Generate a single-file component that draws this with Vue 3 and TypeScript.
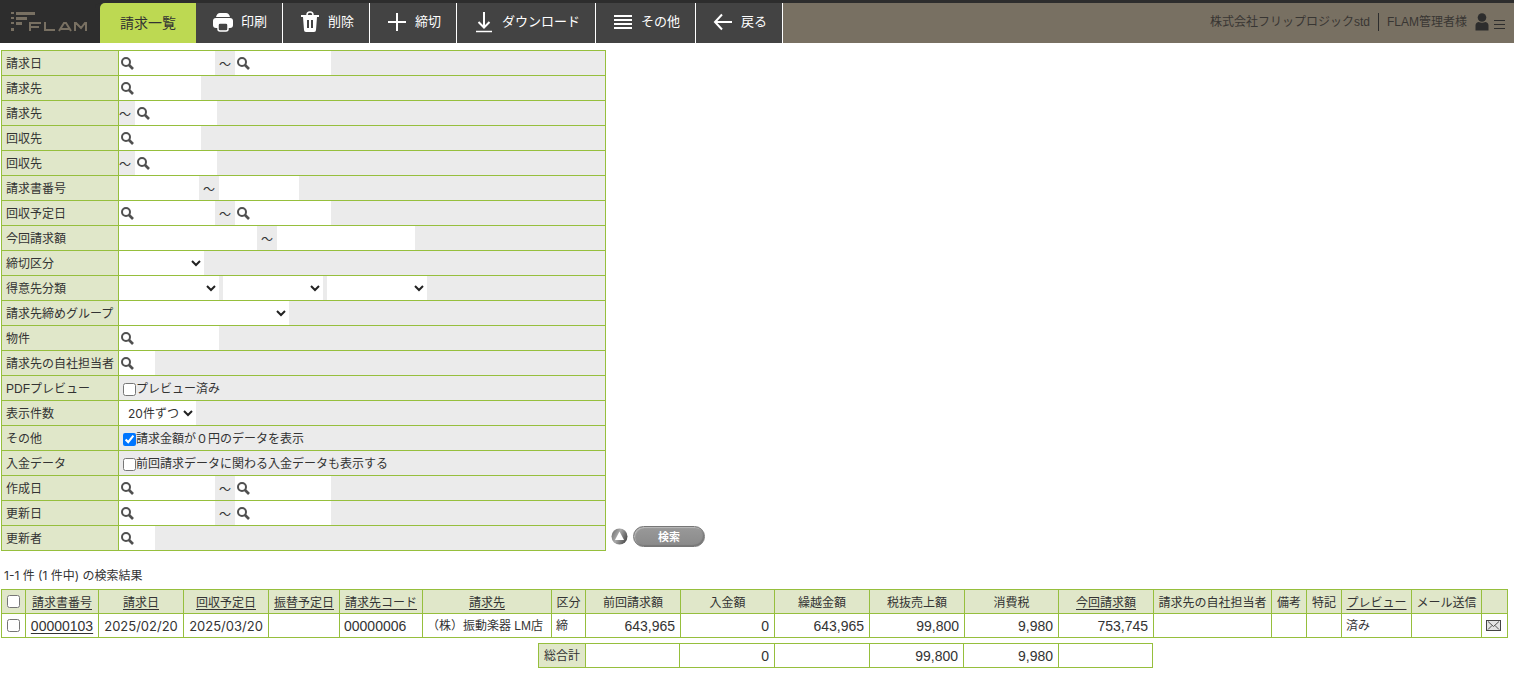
<script setup lang="ts">
import { ref } from 'vue'

interface TextPart { kind: 'text'; width: number; search: boolean }
interface SelectPart { kind: 'select'; width: number; options: string[] }
interface TildePart { kind: 'tilde'; lead?: boolean }
interface CheckPart { kind: 'check'; text: string; checked: boolean }
type Part = TextPart | SelectPart | TildePart | CheckPart

interface Row { label: string; parts: Part[] }

const text = (width: number, search = true): TextPart => ({ kind: 'text', width, search })
const select = (width: number, options: string[] = ['']): SelectPart => ({ kind: 'select', width, options })
const tilde = (lead = false): TildePart => ({ kind: 'tilde', lead })
const check = (label: string, checked = false): CheckPart => ({ kind: 'check', text: label, checked })

const rows = ref<Row[]>([
  { label: '請求日', parts: [text(96), tilde(), text(96)] },
  { label: '請求先', parts: [text(82)] },
  { label: '請求先', parts: [tilde(true), text(82)] },
  { label: '回収先', parts: [text(82)] },
  { label: '回収先', parts: [tilde(true), text(82)] },
  { label: '請求書番号', parts: [text(80, false), tilde(), text(80, false)] },
  { label: '回収予定日', parts: [text(96), tilde(), text(96)] },
  { label: '今回請求額', parts: [text(138, false), tilde(), text(138, false)] },
  { label: '締切区分', parts: [select(85)] },
  { label: '得意先分類', parts: [select(100), select(100), select(100)] },
  { label: '請求先締めグループ', parts: [select(170)] },
  { label: '物件', parts: [text(100)] },
  { label: '請求先の自社担当者', parts: [text(36)] },
  { label: 'PDFプレビュー', parts: [check('プレビュー済み')] },
  { label: '表示件数', parts: [select(77, ['20件ずつ'])] },
  { label: 'その他', parts: [check('請求金額が０円のデータを表示', true)] },
  { label: '入金データ', parts: [check('前回請求データに関わる入金データも表示する')] },
  { label: '作成日', parts: [text(96), tilde(), text(96)] },
  { label: '更新日', parts: [text(96), tilde(), text(96)] },
  { label: '更新者', parts: [text(36)] },
])

const firstControl = (row: Row) => (row.parts[0].kind === 'tilde' ? 1 : 0)

interface Action { label: string; icon: string }
const actions: Action[] = [
  { label: '印刷', icon: 'print' },
  { label: '削除', icon: 'trash' },
  { label: '締切', icon: 'plus' },
  { label: 'ダウンロード', icon: 'download' },
  { label: 'その他', icon: 'list' },
  { label: '戻る', icon: 'back' },
]

interface Column { title: string; width: number; link?: boolean; value: string; kind?: 'num' | 'date' | 'code' | 'link' }
const columns: Column[] = [
  { title: '請求書番号', width: 73, link: true, value: '00000103', kind: 'link' },
  { title: '請求日', width: 85, link: true, value: '2025/02/20', kind: 'date' },
  { title: '回収予定日', width: 85, link: true, value: '2025/03/20', kind: 'date' },
  { title: '振替予定日', width: 71, link: true, value: '' },
  { title: '請求先コード', width: 83, link: true, value: '00000006', kind: 'code' },
  { title: '請求先', width: 129, link: true, value: '（株）振動楽器 LM店' },
  { title: '区分', width: 34, value: '締' },
  { title: '前回請求額', width: 95, value: '643,965', kind: 'num' },
  { title: '入金額', width: 94, value: '0', kind: 'num' },
  { title: '繰越金額', width: 95, value: '643,965', kind: 'num' },
  { title: '税抜売上額', width: 95, value: '99,800', kind: 'num' },
  { title: '消費税', width: 94, value: '9,980', kind: 'num' },
  { title: '今回請求額', width: 95, link: true, value: '753,745', kind: 'num' },
  { title: '請求先の自社担当者', width: 118, value: '' },
  { title: '備考', width: 35, value: '' },
  { title: '特記', width: 35, value: '' },
  { title: 'プレビュー', width: 70, link: true, value: '済み' },
  { title: 'メール送信', width: 70, value: '' },
]

const totals = [
  { width: 94, value: '' },
  { width: 95, value: '0' },
  { width: 95, value: '' },
  { width: 94, value: '99,800' },
  { width: 95, value: '9,980' },
  { width: 94, value: '' },
]

const allSelected = ref(false)
const rowSelected = ref(false)
</script>

<template>
  <div class="page">
    <header class="bar">
      <a class="logo" href="#" aria-label="FLAM">
        <svg width="78" height="22" viewBox="0 0 78 22" fill="none" stroke="#787062">
          <g fill="#787062" stroke="none">
            <rect x="1" y="1" width="3" height="2" /><rect x="6" y="1" width="19" height="3" />
            <rect x="1" y="6" width="3" height="2" /><rect x="6" y="6" width="3" height="3" /><rect x="10" y="6" width="2" height="3" />
            <rect x="6" y="6" width="11" height="3" />
            <rect x="1" y="11" width="3" height="2" /><rect x="6" y="11" width="6" height="3" />
            <rect x="1" y="17" width="3" height="3" />
          </g>
          <g stroke-width="2">
            <path d="M20 20v-8h11M20 16h9" />
            <path d="M35 11v8h10" />
            <path d="M49 20l5-8h2l5 8M51 18h8" />
            <path d="M65 20v-8h1l5 5 4-5h1v8" />
          </g>
        </svg>
      </a>
      <h1 class="tab">請求一覧</h1>
      <nav class="actions">
        <button v-for="a in actions" :key="a.label" type="button" class="action">
          <svg class="action-icon" width="20" height="22" viewBox="0 0 20 22" fill="none" stroke="#fff" stroke-width="2">
            <template v-if="a.icon === 'print'">
              <path d="M3 6q1-4 4-4h6q3 0 4 4z" fill="#fff" stroke="none" />
              <rect x="0" y="7" width="20" height="10" rx="3" fill="#fff" stroke="none" />
              <rect x="5" y="12" width="10" height="8" rx="2" fill="#434343" stroke="#fff" stroke-width="1.5" />
            </template>
            <template v-else-if="a.icon === 'trash'">
              <path d="M7 4q0-3 3-3t3 3" stroke-width="1.5" />
              <path d="M1 4h18v2h-2l-1 13q0 2-2 2H6q-2 0-2-2L3 6H1z" fill="#fff" stroke="none" />
              <path d="M8 9v8M12 9v8" stroke="#434343" />
            </template>
            <path v-else-if="a.icon === 'plus'" d="M10 2v18M1 11h18" />
            <template v-else-if="a.icon === 'download'">
              <path d="M10 1v15M4.5 11l5.5 5.5L15.5 11" />
              <path d="M2 20.5h16" stroke-width="1.5" />
            </template>
            <path v-else-if="a.icon === 'list'" d="M1 5h18M1 9h18M1 13h18M1 17h18" />
            <path v-else d="M9 3.5L2 11l7 7.5M2 11h17" />
          </svg>
          <span>{{ a.label }}</span>
        </button>
      </nav>
      <div class="account">
        <span class="company">株式会社フリップロジックstd</span>
        <span class="user">FLAM管理者様</span>
        <svg class="person" width="14" height="18" viewBox="0 0 14 18" fill="#2d2d2d">
          <circle cx="7" cy="4.5" r="4.3" />
          <path d="M0.5 17.5v-5q0-3 3-3.5q3.5 1.500 7 0q3 .5 3 3.5v5z" />
        </svg>
        <button type="button" class="menu" aria-label="メニュー">
          <svg width="11" height="11" viewBox="0 0 11 11" stroke="#2d2d2d"><path d="M0 1.5h11M0 5.5h11M0 9.5h11" /></svg>
        </button>
      </div>
    </header>

    <main>
      <form class="search" @submit.prevent>
        <table class="criteria">
          <tbody>
            <tr v-for="(row, r) in rows" :key="r">
              <th scope="row"><label :for="`c${r}-${firstControl(row)}`">{{ row.label }}</label></th>
              <td>
                <div class="parts">
                  <template v-for="(p, i) in row.parts" :key="i">
                    <span v-if="p.kind === 'tilde'" class="tilde" :class="{ lead: p.lead }">～</span>
                    <span v-else-if="p.kind === 'text'" class="field" :style="{ width: p.width + 'px' }">
                      <button v-if="p.search" type="button" class="lookup" :aria-label="`${row.label}を選択`">
                        <svg width="13" height="13" viewBox="0 0 13 13" fill="none" stroke="#505050">
                          <circle cx="5" cy="5" r="4" stroke-width="2" />
                          <path d="M8 8L12 12" stroke-width="2.6" />
                        </svg>
                      </button>
                      <input :id="`c${r}-${i}`" type="text" :aria-label="row.label" />
                    </span>
                    <span v-else-if="p.kind === 'select'" class="drop" :style="{ width: p.width + 'px' }">
                      <select :id="`c${r}-${i}`" :aria-label="row.label">
                        <option v-for="o in p.options" :key="o">{{ o }}</option>
                      </select>
                      <svg class="chevron" width="10" height="7" viewBox="0 0 10 7" fill="none" stroke="#222" stroke-width="2"><path d="M1 1l4 4 4-4" /></svg>
                    </span>
                    <label v-else class="check">
                      <input :id="`c${r}-${i}`" v-model="p.checked" type="checkbox" />
                      <span>{{ p.text }}</span>
                    </label>
                  </template>
                </div>
              </td>
            </tr>
          </tbody>
        </table>
        <div class="submit">
          <button type="button" class="collapse" aria-label="条件を閉じる">
            <svg width="17" height="17" viewBox="0 0 17 17">
              <defs>
                <linearGradient id="knob" x1="0" y1="0" x2="1" y2="0.5">
                  <stop offset="0" stop-color="#666" /><stop offset="0.5" stop-color="#aaa" /><stop offset="1" stop-color="#555" />
                </linearGradient>
              </defs>
              <circle cx="8.5" cy="8.5" r="8" fill="url(#knob)" />
              <path d="M8.5 3.5l4.5 8.5h-9z" fill="#fff" />
            </svg>
          </button>
          <button type="submit" class="go">検索</button>
        </div>
      </form>

      <p class="count">1-1 件 (1 件中) の検索結果</p>

      <table class="grid">
        <colgroup>
          <col class="col-check" />
          <col v-for="c in columns" :key="c.title" :style="{ width: c.width + 'px' }" />
          <col class="col-mail" />
        </colgroup>
        <thead>
          <tr>
            <th class="tick"><input v-model="allSelected" type="checkbox" aria-label="すべて選択" /></th>
            <th v-for="c in columns" :key="c.title" scope="col">
              <a v-if="c.link" href="#">{{ c.title }}</a>
              <template v-else>{{ c.title }}</template>
            </th>
            <th></th>
          </tr>
        </thead>
        <tbody>
          <tr>
            <td class="tick"><input v-model="rowSelected" type="checkbox" aria-label="00000103を選択" /></td>
            <td v-for="c in columns" :key="c.title" :class="c.kind">
              <a v-if="c.kind === 'link'" href="#">{{ c.value }}</a>
              <template v-else>{{ c.value }}</template>
            </td>
            <td class="mail">
              <button type="button" aria-label="メール">
                <svg width="15" height="11" viewBox="0 0 15 11" fill="none" stroke="#444">
                  <rect x="0.5" y="0.5" width="14" height="10" fill="#e4e4e4" />
                  <path d="M2 1.5l5.5 5L13 1.5M2 9.5l4-4M13 9.5l-4-4" stroke-width="0.9" />
                </svg>
              </button>
            </td>
          </tr>
        </tbody>
      </table>

      <table class="grid totals">
        <colgroup>
          <col class="col-total" />
          <col v-for="(t, i) in totals" :key="i" :style="{ width: t.width + 'px' }" />
        </colgroup>
        <tbody>
          <tr>
            <th scope="row">総合計</th>
            <td v-for="(t, i) in totals" :key="i" class="num">{{ t.value }}</td>
          </tr>
        </tbody>
      </table>
    </main>
  </div>
</template>

<style>
body {
  margin: 0;
  background: #fff;
}
</style>

<style scoped>
.page {
  font-family: "Liberation Sans", "Noto Sans CJK JP", sans-serif;
  font-size: 12px;
  line-height: 18px;
  color: #333;
}
button,
input,
select {
  font: inherit;
  color: inherit;
}
button {
  border: 0;
  padding: 0;
  background: none;
  cursor: pointer;
}
svg {
  display: block;
  flex: none;
}
.bar {
  display: flex;
  height: 40px;
  border-top: 3px solid #2d2d2d;
  background: #787062;
}
.logo {
  width: 90px;
  padding: 8px 0 0 10px;
  background: #2d2d2d;
}
.tab {
  margin: 0;
  padding: 0 20px;
  border-top-left-radius: 5px;
  background: #bdd952;
  box-shadow: -5px 0 0 #2d2d2d;
  font-size: 14px;
  font-weight: 400;
  line-height: 40px;
  white-space: nowrap;
}
.actions {
  display: flex;
}
.action {
  display: flex;
  align-items: center;
  gap: 8px;
  padding: 0 15px 2px 17px;
  border-right: 1px solid #fff;
  background: #434343;
  color: #fff;
  font-size: 13px;
  white-space: nowrap;
}
.account {
  display: flex;
  align-items: center;
  margin-left: auto;
  padding: 0 9px 3px 0;
  color: #383633;
  white-space: nowrap;
}
.company {
  padding-right: 8px;
  border-right: 1px solid #2d2d2d;
}
.user {
  padding: 0 8px;
}
.menu {
  margin: 6px 0 0 5px;
}
.search {
  display: flex;
  align-items: flex-end;
  padding: 7px 0 0 1px;
}
.criteria {
  width: 605px;
  border-collapse: collapse;
}
.criteria th,
.criteria td {
  height: 24px;
  padding: 0;
  border: 1px solid #96bf3d;
  background: #ebebeb;
}
.criteria th {
  width: 116px;
  background: #e0e7c9;
  font-weight: 400;
  text-align: left;
  white-space: nowrap;
}
.criteria th label {
  display: block;
  padding: 2px 0 0 4px;
}
.parts {
  display: flex;
  align-items: center;
  height: 24px;
}
.field {
  display: flex;
  height: 24px;
  background: #fff;
}
.field input {
  flex: 1;
  min-width: 0;
  padding: 0 2px;
  border: 0;
  background: none;
}
.lookup {
  padding: 0 0 0 2px;
}
.tilde {
  padding: 2px 4px 0;
  font-family: "Noto Sans CJK JP", sans-serif;
}
.tilde.lead {
  padding-left: 0;
}
.drop {
  position: relative;
  height: 24px;
}
.drop + .drop {
  margin-left: 4px;
}
.drop select {
  width: 100%;
  height: 24px;
  padding: 2px 0 0 9px;
  border: 0;
  border-radius: 0;
  background: #fff;
  font-family: Inter, "Noto Sans CJK JP", sans-serif;
  appearance: none;
}
.chevron {
  position: absolute;
  top: 9px;
  right: 3px;
  pointer-events: none;
}
.check {
  display: flex;
  align-items: center;
  padding-top: 2px;
}
.check input {
  width: 13px;
  height: 13px;
  margin: 0 0 0 4px;
}
.submit {
  display: flex;
  align-items: center;
  gap: 5px;
  padding: 0 0 4px 5px;
}
.go {
  width: 72px;
  height: 21px;
  border: 1px solid #777;
  border-radius: 11px;
  background: linear-gradient(#999, #8a8a8a);
  box-shadow: inset 1px 1px 1px #bbb, inset -1px -1px 1px #777;
  color: #fff;
  font-size: 11px;
  font-weight: 700;
  line-height: 18px;
}
.count {
  margin: 16px 0 4px 4px;
  font-family: Inter, "Noto Sans CJK JP", sans-serif;
}
.grid {
  margin-left: 1px;
  border-collapse: collapse;
  white-space: nowrap;
}
.grid th,
.grid td {
  height: 23px;
  padding: 0 4px;
  border: 1px solid #96bf3d;
}
.grid th {
  background: #e0e7c9;
  font-weight: 400;
}
.grid a {
  color: inherit;
  text-underline-offset: 2px;
}
.grid thead th {
  height: 21px;
  padding-top: 2px;
}
.grid .tick {
  padding: 0;
}
.tick input {
  display: block;
  width: 13px;
  height: 13px;
  margin: 0 auto;
}
.col-check {
  width: 24px;
}
.col-mail {
  width: 26px;
}
.col-total {
  width: 47px;
}
.num,
.date,
.code,
.link {
  font-size: 14px;
}
.grid .num {
  padding-right: 5px;
  text-align: right;
}
.link,
.date {
  text-align: center;
}
.date {
  font-family: Inter, sans-serif;
  font-size: 13px;
}
.mail button {
  display: block;
}
.totals {
  margin: 5px 0 0 538px;
}
</style>
